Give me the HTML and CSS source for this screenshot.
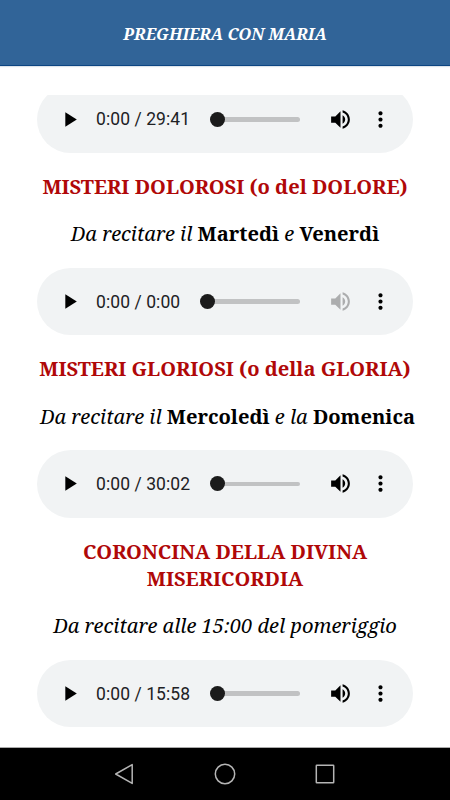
FILE: index.html
```html
<!DOCTYPE html>
<html lang="it">
<head>
    <meta charset="UTF-8">
    <meta name="viewport" content="width=device-width, initial-scale=1.0">
    <link rel="stylesheet" href="styles.css">
    <title>Preghiera con Maria</title>
</head>
<body>
    <svg class="symbols">
        <symbol id="play" viewBox="0 0 24 24"><path d="M8 5v14l11-7z"/></symbol>
        <symbol id="volume" viewBox="0 0 24 24"><path d="M3 9v6h4l5 5V4L7 9H3zm13.5 3c0-1.77-1.02-3.29-2.5-4.03v8.05c1.48-.73 2.5-2.25 2.5-4.02zM14 3.23v2.06c2.89.86 5 3.54 5 6.71s-2.11 5.85-5 6.71v2.06c4.01-.91 7-4.49 7-8.77s-2.99-7.86-7-8.77z"/></symbol>
        <symbol id="more" viewBox="0 0 24 24"><path d="M12 8c1.1 0 2-.9 2-2s-.9-2-2-2-2 .9-2 2 .9 2 2 2zm0 2c-1.1 0-2 .9-2 2s.9 2 2 2 2-.9 2-2-.9-2-2-2zm0 6c-1.1 0-2 .9-2 2s.9 2 2 2 2-.9 2-2-.9-2-2-2z"/></symbol>
    </svg>

    <header class="header">
        <h1 class="title">PREGHIERA CON MARIA</h1>
    </header>

    <main class="content">
        <div class="player first">
            <svg class="icon"><use href="#play"/></svg>
            <span class="time">0:00 / 29:41</span>
            <div class="track"><div class="thumb"></div></div>
            <svg class="icon volume"><use href="#volume"/></svg>
            <svg class="icon"><use href="#more"/></svg>
        </div>

        <h2>MISTERI DOLOROSI (o del DOLORE)</h2>
        <p><em>Da recitare il</em> <b>Martedì</b> <em>e</em> <b>Venerdì</b></p>
        <div class="player">
            <svg class="icon"><use href="#play"/></svg>
            <span class="time">0:00 / 0:00</span>
            <div class="track"><div class="thumb"></div></div>
            <svg class="icon volume disabled"><use href="#volume"/></svg>
            <svg class="icon"><use href="#more"/></svg>
        </div>

        <h2>MISTERI GLORIOSI (o della GLORIA)</h2>
        <p class="indent"><em>Da recitare il</em> <b>Mercoledì</b> <em>e la</em> <b>Domenica</b></p>
        <div class="player">
            <svg class="icon"><use href="#play"/></svg>
            <span class="time">0:00 / 30:02</span>
            <div class="track"><div class="thumb"></div></div>
            <svg class="icon volume"><use href="#volume"/></svg>
            <svg class="icon"><use href="#more"/></svg>
        </div>

        <h2>CORONCINA DELLA DIVINA<br>MISERICORDIA</h2>
        <p><em>Da recitare alle 15:00 del pomeriggio</em></p>
        <div class="player">
            <svg class="icon"><use href="#play"/></svg>
            <span class="time">0:00 / 15:58</span>
            <div class="track"><div class="thumb"></div></div>
            <svg class="icon volume"><use href="#volume"/></svg>
            <svg class="icon"><use href="#more"/></svg>
        </div>
    </main>

    <nav class="navbar">
        <svg viewBox="0 0 24 24"><path d="M19.2 2.6v18.8L2.7 12z"/></svg>
        <svg viewBox="0 0 24 24"><circle cx="12" cy="12" r="9.7"/></svg>
        <svg viewBox="0 0 24 24"><rect x="3.3" y="3.3" width="17.4" height="17.4" rx=".5"/></svg>
    </nav>
</body>
</html>
```

FILE: styles.css
```css
body {
    margin: 0;
    height: 800px;
    display: flex;
    flex-direction: column;
    overflow: hidden;
    background-color: #fff;
    color: #000;
    font-family: 'Noto Serif', 'DejaVu Serif', serif;
}

.symbols {
    display: none;
}

.header {
    height: 65px;
    flex: none;
    display: flex;
    align-items: center;
    justify-content: center;
    background-color: #316498;
    border-bottom: 1px solid #0c4582;
    box-shadow: 0 1px 1px #dde3ea;
}

.title {
    margin: 3px 0 0;
    color: #fff;
    font-size: 16.35px;
    font-style: italic;
    font-weight: bold;
    white-space: nowrap;
}

.content {
    flex: 1;
    min-height: 0;
    margin-top: 29px;
    padding: 0 37px;
    overflow: hidden;
}

h2, .content p {
    margin: 20px -20px;
    font-size: 20.1px;
    line-height: 27.4px;
    text-align: center;
    white-space: nowrap;
}

h2 {
    color: #b00808;
    font-weight: bold;
}

.content .indent {
    padding-left: 5px;
}

.player {
    height: 67.5px;
    padding: 0 20px;
    box-sizing: border-box;
    display: flex;
    align-items: center;
    border-radius: 34px;
    background-color: #f1f3f4;
}

/* scrolled partly under the top edge */
.first {
    margin-top: -9.5px;
}

.icon {
    width: 25px;
    height: 25px;
    flex: none;
}

.time {
    margin-left: 14px;
    font-family: Roboto, sans-serif;
    font-size: 17.5px;
    letter-spacing: .08px;
    color: #202124;
}

.track {
    flex: 1;
    height: 4.6px;
    margin-left: 20px;
    display: flex;
    align-items: center;
    border-radius: 3px;
    background-color: #c1c2c3;
}

.thumb {
    width: 15px;
    height: 15px;
    flex: none;
    border-radius: 50%;
    background-color: #1b1b1b;
}

.volume {
    margin-left: 28px;
    margin-right: 15px;
}

.disabled {
    fill: #acadae;
}

.navbar {
    height: 53px;
    flex: none;
    box-sizing: border-box;
    display: flex;
    align-items: center;
    justify-content: center;
    gap: 76px;
    background-color: #000;
    border-top: 1px solid #aaa;
}

.navbar svg {
    width: 24px;
    height: 24px;
    fill: none;
    stroke: #b5b5b5;
    stroke-width: 1.5;
    stroke-linejoin: round;
}
```
